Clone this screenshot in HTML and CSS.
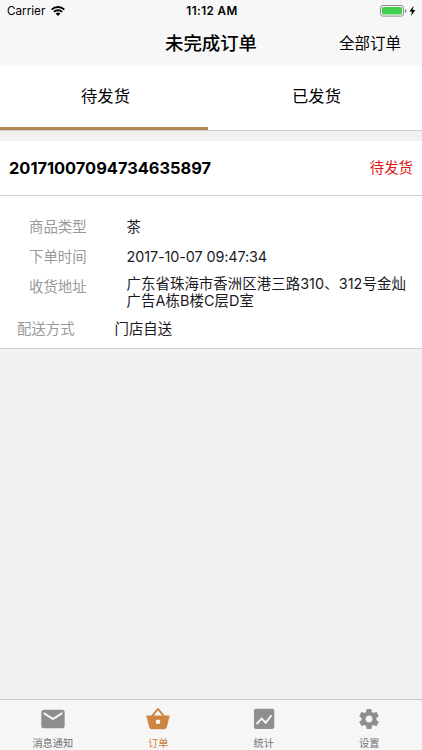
FILE: index.html
```
<!DOCTYPE html>
<html lang="zh-CN">
<head>
  <meta charset="UTF-8">
  <meta name="viewport" content="width=device-width, initial-scale=1.0">
  <title>未完成订单</title>
  <link rel="stylesheet" href="styles.css">
</head>
<body>
  <header class="header">
    <div class="status-bar">
      <div class="carrier">
        <span>Carrier</span>
        <svg class="wifi" viewBox="0 0 14 10">
          <path d="M0.7 3.6a9 9 0 0 1 12.6 0M2.9 5.9a5.9 5.9 0 0 1 8.2 0" fill="none" stroke="#000" stroke-width="1.9"/>
          <path d="M7 10 4.6 7.6a3.4 3.4 0 0 1 4.8 0z"/>
        </svg>
      </div>
      <div class="time">11:12 AM</div>
      <div class="power">
        <svg class="battery" viewBox="0 0 37 12">
          <rect x="0.5" y="0.5" width="23" height="10.6" rx="2.4" fill="#fff" stroke="#8c8c8c"/>
          <rect x="2" y="2" width="20" height="7.6" rx="1" fill="#40d04f"/>
          <path d="M25 4v4q1.5-.6 1.5-2T25 4z" fill="#8c8c8c"/>
          <path d="M33.6 .8 29.4 6.4h2.6l-1 4.6 4.3-5.9h-2.7z"/>
        </svg>
      </div>
    </div>
    <div class="nav">
      <h1 class="title">未完成订单</h1>
      <a class="all-orders">全部订单</a>
    </div>
  </header>

  <div class="tabs">
    <div class="tab active">待发货</div>
    <div class="tab">已发货</div>
  </div>

  <main class="content">
    <div class="order">
      <div class="order-header">
        <span class="order-number">20171007094734635897</span>
        <span class="order-status">待发货</span>
      </div>
      <div class="order-body">
        <div class="row">
          <span class="label">商品类型</span>
          <span class="value">茶</span>
        </div>
        <div class="row">
          <span class="label">下单时间</span>
          <span class="value date">2017-10-07 09:47:34</span>
        </div>
        <div class="row address">
          <span class="label">收货地址</span>
          <span class="value">广东省珠海市香洲区港三路310、312号金灿<br>广告A栋B楼C层D室</span>
        </div>
        <div class="row delivery">
          <span class="label">配送方式</span>
          <span class="value">门店自送</span>
        </div>
      </div>
    </div>
  </main>

  <nav class="tab-bar">
    <div class="tab-item">
      <svg viewBox="0 0 24 24"><path d="M20 4H4c-1.1 0-2 .9-2 2v12c0 1.1.9 2 2 2h16c1.1 0 2-.9 2-2V6c0-1.1-.9-2-2-2zm0 4-8 5-8-5V6l8 5 8-5z"/></svg>
      <span>消息通知</span>
    </div>
    <div class="tab-item selected">
      <svg viewBox="0 0 24 24">
        <path d="M6.9 9.5 12 3.4l5.1 6.1" fill="none" stroke="currentColor" stroke-width="1.6" stroke-linejoin="round"/>
        <path fill-rule="evenodd" d="M2.1 9.1h19.8v1.7h-.3l-2 8.1q-.3 1.8-2 1.8H6.4q-1.7 0-2-1.8l-2-8.1h-.3zM12 12.4a2 2 0 1 0 0 4 2 2 0 0 0 0-4z"/>
      </svg>
      <span>订单</span>
    </div>
    <div class="tab-item">
      <svg viewBox="0 0 24 24">
        <rect x="3.4" y="3.2" width="17.4" height="17.4" rx="1.8"/>
        <path d="M5.6 16.3 10 11.7l3.5 3.5 4.9-6.4" fill="none" stroke="#f6f6f6" stroke-width="1.7"/>
      </svg>
      <span>统计</span>
    </div>
    <div class="tab-item">
      <svg class="gear" viewBox="0 0 24 24"><path d="M19.43 12.98c.04-.32.07-.64.07-.98s-.03-.66-.07-.98l2.11-1.65c.19-.15.24-.42.12-.64l-2-3.46c-.12-.22-.39-.3-.61-.22l-2.49 1c-.52-.4-1.08-.73-1.69-.98l-.38-2.65C14.46 2.18 14.25 2 14 2h-4c-.25 0-.46.18-.49.42l-.38 2.65c-.61.25-1.17.59-1.69.98l-2.49-1c-.23-.09-.49 0-.61.22l-2 3.46c-.13.22-.07.49.12.64l2.11 1.65c-.04.32-.07.65-.07.98s.03.66.07.98l-2.11 1.65c-.19.15-.24.42-.12.64l2 3.46c.12.22.39.3.61.22l2.49-1c.52.4 1.08.73 1.69.98l.38 2.65c.03.24.24.42.49.42h4c.25 0 .46-.18.49-.42l.38-2.65c.61-.25 1.17-.59 1.69-.98l2.49 1c.23.09.49 0 .61-.22l2-3.46c.12-.22.07-.49-.12-.64zM12 15.5c-1.93 0-3.5-1.57-3.5-3.5s1.57-3.5 3.5-3.5 3.5 1.57 3.5 3.5-1.57 3.5-3.5 3.5z"/></svg>
      <span>设置</span>
    </div>
  </nav>
</body>
</html>
```
FILE: styles.css
```
* {
  box-sizing: border-box;
}

body {
  margin: 0;
  height: 750px;
  display: flex;
  flex-direction: column;
  overflow: hidden;
  font-family: Inter, 'Noto Sans CJK SC', sans-serif;
  background-color: #f1f1f1;
  color: #000;
}

.header {
  height: 66px;
  background-color: #f7f7f7;
}

.status-bar {
  display: grid;
  grid-template-columns: 1fr auto 1fr;
  align-items: center;
  height: 22px;
  padding: 0 5px 0 7px;
  font-size: 11.7px;
}

.carrier {
  display: flex;
  align-items: center;
  gap: 6px;
}

.wifi {
  width: 14px;
  height: 10px;
}

.time {
  font-weight: 600;
  letter-spacing: 0.4px;
}

.power {
  display: flex;
  justify-content: flex-end;
}

.battery {
  width: 37px;
  height: 12px;
}

.nav {
  display: grid;
  grid-template-columns: 1fr auto 1fr;
  align-items: center;
  height: 40px;
  padding: 0 21px;
}

.title {
  grid-column: 2;
  margin: 0;
  font-size: 18.4px;
  font-weight: 500;
}

.all-orders {
  justify-self: end;
  font-size: 15.5px;
}

.tabs {
  display: flex;
  height: 65px;
  background-color: #fff;
  border-bottom: 1px solid #d0d0d0;
}

.tab {
  flex: 1;
  height: 60px;
  line-height: 60px;
  text-align: center;
  font-size: 16.3px;
}

.active {
  position: relative;
}

.active::after {
  content: "";
  position: absolute;
  left: 0;
  bottom: -4px;
  width: 208px;
  height: 3px;
  background-color: #b08850;
}

.content {
  flex: 1;
  padding-top: 10px;
}

.order {
  background-color: #fff;
  border-bottom: 1px solid #d0d0d0;
}

.order-header {
  display: flex;
  justify-content: space-between;
  align-items: center;
  height: 55px;
  padding: 0 9px;
  border-bottom: 1px solid #d0d0d0;
}

.order-number {
  font-size: 16.4px;
  font-weight: 700;
}

.order-status {
  margin-top: -3px;
  font-size: 14.4px;
  color: #e01515;
}

.order-body {
  height: 152px;
  padding: 16px 9px 0 29px;
  font-size: 14.4px;
}

.row {
  display: flex;
  height: 29.5px;
  line-height: 29.5px;
}

.label {
  width: 97.5px;
  color: #999;
}

.value {
  color: #1a1a24;
  white-space: nowrap;
}

.date {
  letter-spacing: -0.1px;
}

.address {
  height: 43px;
}

.address .label {
  padding-top: 0.5px;
}

.address .value {
  padding-top: 4px;
  line-height: 17px;
  letter-spacing: 0.08px;
}

.delivery {
  margin-left: -12px;
}

.tab-bar {
  display: flex;
  height: 51px;
  background-color: #f6f6f6;
  border-top: 1px solid #c8c8c8;
}

.tab-item {
  flex: 1;
  display: flex;
  flex-direction: column;
  align-items: center;
  padding-top: 5px;
  font-size: 10.2px;
  line-height: 20px;
  color: #707070;
}

.tab-item svg {
  width: 28px;
  height: 28px;
  flex: none;
  fill: #8e8e8e;
}

.tab-item .gear {
  width: 24px;
}

.tab-item.selected {
  color: #cd853f;
}

.tab-item.selected svg {
  fill: #cd853f;
}
```
